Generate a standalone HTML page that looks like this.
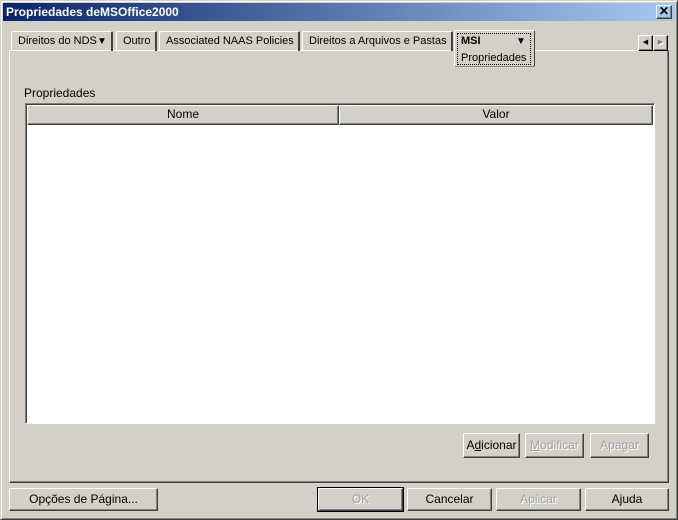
<!DOCTYPE html>
<html><head><style>
*{box-sizing:border-box;margin:0;padding:0}
body{width:678px;height:520px;background:#d4d0c8;font-family:"Liberation Sans",sans-serif;font-size:11px;color:#000;position:relative;overflow:hidden}
.a{position:absolute}
.win{left:0;top:0;width:678px;height:520px;border:1px solid;border-color:#d4d0c8 #404040 #404040 #d4d0c8;box-shadow:inset 1px 1px #fff,inset -1px -1px #808080}
.title{left:3px;top:3px;width:672px;height:18px;background:linear-gradient(90deg,#0a246a,#a6caf0);color:#fff;font-weight:bold;font-size:12px;line-height:18px;padding-left:3px}
.btn{border:1px solid;border-color:#fff #404040 #404040 #fff;box-shadow:inset -1px -1px #808080;text-align:center;font-size:12px}
.dis{color:#a0a0a0;text-shadow:1px 1px #fff}
.tab{top:31px;height:20px;border-top:1px solid #fff;border-left:1px solid #fff;border-right:2px solid #404040;border-radius:2px 2px 0 0;line-height:18px;padding-left:6px;font-size:11px}
.panel{left:9px;top:50px;width:660px;height:433px;border:1px solid;border-color:#fff #404040 #404040 #fff;box-shadow:inset -1px -1px #808080}
.hd{top:105px;height:20px;border:1px solid;border-color:#fff #404040 #404040 #fff;box-shadow:inset -1px -1px #808080;text-align:center;line-height:17px;font-size:12px}
</style></head><body>
<div class="a win"></div>
<div class="a title">Propriedades deMSOffice2000</div>
<div class="a btn" style="left:656px;top:5px;width:16px;height:14px;line-height:11px;font-weight:bold;font-size:12px">✕</div>
<div class="a panel"></div>
<div class="a tab" style="left:11px;width:102px">Direitos do NDS</div>
<div class="a" style="left:97px;top:36px;font-size:10px">▼</div>
<div class="a tab" style="left:116px;width:41px">Outro</div>
<div class="a tab" style="left:159px;width:141px">Associated NAAS Policies</div>
<div class="a tab" style="left:302px;width:151px">Direitos a Arquivos e Pastas</div>
<div class="a" style="left:454px;top:30px;width:81px;height:37px;background:#d4d0c8;border:1px solid;border-color:#fff #404040 #808080 #fff;border-radius:2px"></div>
<div class="a" style="left:457px;top:33px;width:74px;height:32px;border:1px dotted #000"></div>
<div class="a" style="left:461px;top:35px;font-weight:bold;font-size:11px">MSI</div>
<div class="a" style="left:516px;top:36px;font-size:10px">▼</div>
<div class="a" style="left:461px;top:52px;font-size:11px">Propriedades</div>
<div class="a btn" style="left:638px;top:35px;width:15px;height:16px;font-size:7px;line-height:14px;border-color:#fff #000 #000 #fff">◀</div>
<div class="a btn dis" style="left:653px;top:35px;width:15px;height:16px;font-size:7px;line-height:14px;border-color:#fff #000 #000 #fff;color:#808080">▶</div>
<div class="a" style="left:24px;top:86px;font-size:12px">Propriedades</div>
<div class="a" style="left:25px;top:103px;width:630px;height:321px;background:#fff;border:1px solid;border-color:#808080 #fff #fff #808080;box-shadow:inset 1px 1px #404040"></div>
<div class="a hd" style="left:27px;width:312px;background:#d4d0c8">Nome</div>
<div class="a hd" style="left:339px;width:314px;background:#d4d0c8">Valor</div>
<div class="a btn" style="left:463px;top:433px;width:57px;height:25px;line-height:23px">A<u>d</u>icionar</div>
<div class="a btn dis" style="left:525px;top:433px;width:59px;height:25px;line-height:23px"><u>M</u>odificar</div>
<div class="a btn dis" style="left:590px;top:433px;width:59px;height:25px;line-height:23px">Apa<u>g</u>ar</div>
<div class="a btn" style="left:9px;top:488px;width:149px;height:23px;line-height:21px">Opções de Pá<u>g</u>ina...</div>
<div class="a btn dis" style="left:318px;top:488px;width:85px;height:23px;line-height:21px;outline:1px solid #000">OK</div>
<div class="a btn" style="left:407px;top:488px;width:85px;height:23px;line-height:21px">Cancelar</div>
<div class="a btn dis" style="left:496px;top:488px;width:85px;height:23px;line-height:21px">Aplicar</div>
<div class="a btn" style="left:585px;top:488px;width:84px;height:23px;line-height:21px">A<u>j</u>uda</div>
</body></html>
